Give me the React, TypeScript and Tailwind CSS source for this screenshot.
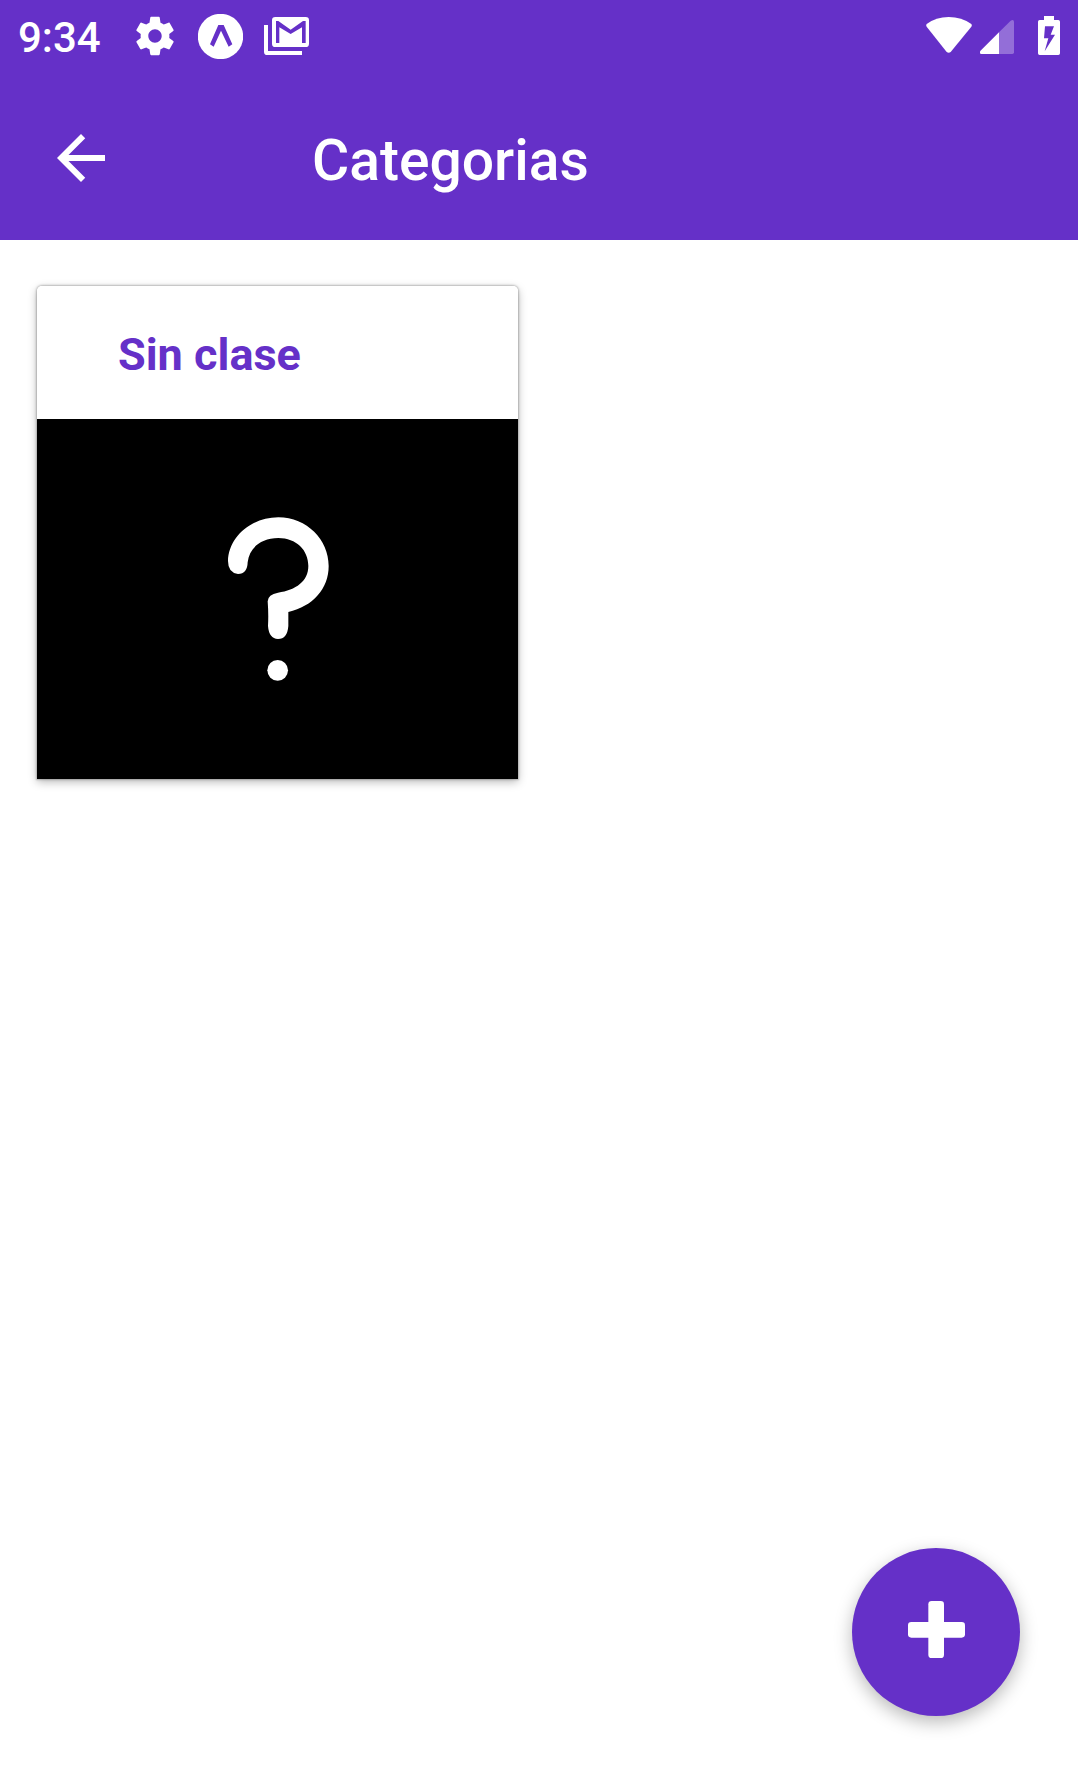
import React from "react";

function SettingsIcon() {
  return (
    <svg viewBox="0 0 24 24" className="size-[46px]" fill="currentColor" aria-hidden="true">
      <path d="M19.43 12.98c.04-.32.07-.64.07-.98s-.03-.66-.07-.98l2.11-1.65c.19-.15.24-.42.12-.64l-2-3.46c-.12-.22-.39-.3-.61-.22l-2.49 1c-.52-.4-1.08-.73-1.69-.98l-.38-2.65C14.46 2.18 14.25 2 14 2h-4c-.25 0-.46.18-.49.42l-.38 2.65c-.61.25-1.17.59-1.69.98l-2.49-1c-.23-.09-.49 0-.61.22l-2 3.46c-.13.22-.07.49.12.64l2.11 1.65c-.04.32-.07.65-.07.98s.03.66.07.98l-2.11 1.65c-.19.15-.24.42-.12.64l2 3.46c.12.22.39.3.61.22l2.49-1c.52.4 1.08.73 1.69.98l.38 2.65c.03.24.24.42.49.42h4c.25 0 .46-.18.49-.42l.38-2.65c.61-.25 1.17-.59 1.69-.98l2.49 1c.23.09.49 0 .61-.22l2-3.46c.12-.22.07-.49-.12-.64l-2.11-1.65zM12 15.5c-1.93 0-3.5-1.57-3.5-3.5s1.57-3.5 3.5-3.5 3.5 1.57 3.5 3.5-1.57 3.5-3.5 3.5z" />
    </svg>
  );
}

function ExpoIcon() {
  return (
    <svg viewBox="0 0 135 135" className="size-[45px]" aria-hidden="true">
      <circle cx="67.500" cy="67.500" r="68" fill="currentColor" />
      <path
        d="M61 33H77L103 91L92 98L69 50L47 98L36 91Z"
        fill="#6530c8"
      />
    </svg>
  );
}

function MailStackIcon() {
  return (
    <svg viewBox="0 0 135 114" className="h-[38px] w-[45px]" aria-hidden="true">
      <path d="M0 24H12V102H114V114H10Q0 114 0 104Z" fill="currentColor" />
      <path
        fill="currentColor"
        fillRule="evenodd"
        d="M34 0H125Q135 0 135 10V80Q135 90 125 90H34Q24 90 24 80V10Q24 0 34 0ZM36 12V78H46V31L80 51L114 31V78H125V12H117L80 38L43 12Z"
      />
    </svg>
  );
}

function WifiIcon() {
  return (
    <svg viewBox="0 0 138 108" className="h-9 w-[46px]" fill="currentColor" aria-hidden="true">
      <path d="M2 21Q30 0 68 0Q107 0 136 21Q139 25 136 29L74 105Q68 110 62 105L2 29Q-1 25 2 21Z" />
    </svg>
  );
}

function SignalIcon() {
  return (
    <svg viewBox="0 0 102 102" className="size-[34px]" fill="currentColor" aria-hidden="true">
      <path opacity="0.300" d="M57 37L92 2Q102 -3 102 6V97Q102 102 97 102H57Z" />
      <path d="M57 37V102H4Q0 102 0 98V94Z" />
    </svg>
  );
}

function BatteryIcon() {
  return (
    <svg viewBox="0 0 66 117" className="h-[39px] w-[22px]" aria-hidden="true">
      <path
        fill="currentColor"
        fillRule="evenodd"
        d="M18 0H48V12H61Q66 12 66 17V112Q66 117 61 117H5Q0 117 0 112V17Q0 12 5 12H18ZM21 31L18 67H31L20 106L51 56H38L48 31Z"
      />
    </svg>
  );
}

function BackIcon() {
  return (
    <svg viewBox="0 0 24 24" className="size-[72px]" fill="currentColor" aria-hidden="true">
      <path d="M20 11H7.830l5.590-5.590L12 4l-8 8 8 8 1.410-1.410L7.830 13H20v-2z" />
    </svg>
  );
}

function QuestionIcon() {
  return (
    <svg viewBox="-5 -3 480 660" className="h-[220px] w-[160px]" fill="#fff" aria-hidden="true">
      <path d="M85 213C86 145 150 82 236 82C322 82 387 150 387 228C387 296 340 349 266 366V408Q263 447 235 447Q208 446 205 408Q207 372 204 334Q205 313 235 308C289 300 326 274 326 228C326 180 290 144 236 144C182 145 149 174 144 217Q143 252 115 252Q85 248 85 213Z" />
      <circle cx="234" cy="541" r="31" />
    </svg>
  );
}

function PlusIcon() {
  return (
    <svg viewBox="0 0 171 171" className="size-[57px]" fill="currentColor" aria-hidden="true">
      <rect x="61" y="0" width="47" height="171" rx="10" />
      <rect x="0" y="63" width="171" height="47" rx="10" />
    </svg>
  );
}

function StatusBar() {
  return (
    <div className="flex h-[72px] items-center justify-between px-[18px]">
      <div className="flex items-center">
        <time className="w-[114px] pt-1 text-[42px] leading-[50px] font-medium">9:34</time>
        <SettingsIcon />
        <div className="ml-5">
          <ExpoIcon />
        </div>
        <div className="ml-[21px]">
          <MailStackIcon />
        </div>
      </div>
      <div className="flex items-center pb-0.5">
        <WifiIcon />
        <div className="ml-2 pt-1">
          <SignalIcon />
        </div>
        <div className="ml-6">
          <BatteryIcon />
        </div>
      </div>
    </div>
  );
}

const categories = [{ name: "Sin clase" }];

export default function App() {
  return (
    <div className="flex min-h-screen flex-col bg-white font-[Roboto,sans-serif]">
      <header className="bg-[#6530c8] text-white">
        <StatusBar />
        <div className="flex h-[168px] items-center pt-1 pl-[45px]">
          <button type="button" aria-label="Volver" className="flex">
            <BackIcon />
          </button>
          <h1 className="ml-[195px] pt-1.5 text-[57px] leading-[68px] font-medium">Categorias</h1>
        </div>
      </header>

      <main className="grid grid-cols-2 items-start gap-[42px] px-[37px] pt-[46px]">
        {categories.map((category) => (
          <article
            key={category.name}
            className="overflow-hidden rounded-t-[5px] shadow-[0_0_2px_1px_rgba(0,0,0,0.22),0_3px_10px_rgba(0,0,0,0.28)]"
          >
            <h2 className="flex h-[133px] items-center bg-white pt-1 pl-[81px] text-[45px] leading-[54px] font-bold text-[#6530c8]">
              {category.name}
            </h2>
            <div className="flex h-[360px] items-center justify-center bg-black">
              <QuestionIcon />
            </div>
          </article>
        ))}
      </main>

      <button
        type="button"
        aria-label="Agregar categoria"
        className="fixed right-[58px] bottom-[50px] flex size-[168px] items-center justify-center rounded-full bg-[#6530c8] pb-1.5 text-white shadow-[0_6px_18px_rgba(0,0,0,0.28)]"
      >
        <PlusIcon />
      </button>
    </div>
  );
}
